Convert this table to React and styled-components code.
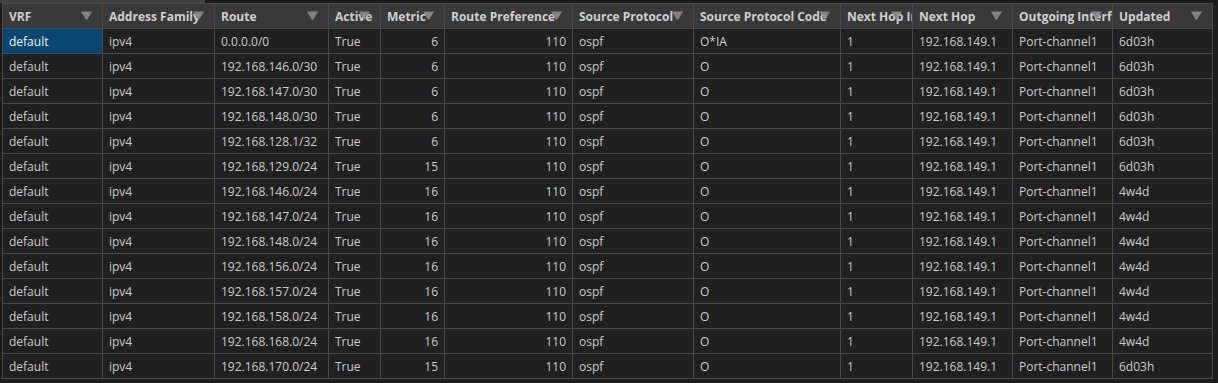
import styled, { createGlobalStyle } from "styled-components";

const GlobalStyle = createGlobalStyle`
	html, body {
		margin: 0;
		padding: 0;
		background: #1c1c1c;
	}
	body {
		font-family: "Open Sans", "Noto Sans", sans-serif;
		font-size: 12px;
		color: #cccccc;
	}
`;

const columns = [
	{ key: "vrf", label: "VRF", width: 100 },
	{ key: "af", label: "Address Family", width: 112 },
	{ key: "route", label: "Route", width: 114 },
	{ key: "active", label: "Active", width: 52 },
	{ key: "metric", label: "Metric", width: 64, right: true },
	{ key: "pref", label: "Route Preference", width: 128, right: true },
	{ key: "proto", label: "Source Protocol", width: 121 },
	{ key: "code", label: "Source Protocol Code", width: 147 },
	{ key: "nhi", label: "Next Hop Interface", width: 72 },
	{ key: "nh", label: "Next Hop", width: 100 },
	{ key: "oif", label: "Outgoing Interface", width: 100 },
	{ key: "updated", label: "Updated", width: 100 },
];

const routes = [
	["0.0.0.0/0", 6, "O*IA", "6d03h"],
	["192.168.146.0/30", 6, "O", "6d03h"],
	["192.168.147.0/30", 6, "O", "6d03h"],
	["192.168.148.0/30", 6, "O", "6d03h"],
	["192.168.128.1/32", 6, "O", "6d03h"],
	["192.168.129.0/24", 15, "O", "6d03h"],
	["192.168.146.0/24", 16, "O", "4w4d"],
	["192.168.147.0/24", 16, "O", "4w4d"],
	["192.168.148.0/24", 16, "O", "4w4d"],
	["192.168.156.0/24", 16, "O", "4w4d"],
	["192.168.157.0/24", 16, "O", "4w4d"],
	["192.168.158.0/24", 16, "O", "4w4d"],
	["192.168.168.0/24", 16, "O", "4w4d"],
	["192.168.170.0/24", 15, "O", "6d03h"],
].map(([route, metric, code, updated]) => ({
	vrf: "default",
	af: "ipv4",
	route,
	active: "True",
	metric,
	pref: 110,
	proto: "ospf",
	code,
	nhi: "1",
	nh: "192.168.149.1",
	oif: "Port-channel1",
	updated,
}));

const Page = styled.div`
	display: flex;
	flex-direction: column;
`;

const ScrollStrip = styled.div`
	height: 3px;
	background: #1a1a1a;
	display: flex;
`;

const ScrollThumb = styled.div`
	width: 205px;
	background: #424242;
`;

const Grid = styled.div`
	display: grid;
	grid-template-columns: ${({ widths }) => widths.map((w) => `${w}px`).join(" ")};
	grid-auto-rows: 25px;
	margin-left: 2px;
	width: max-content;
	border-left: 1px solid #4a4a4a;
	border-top: 1px solid #4a4a4a;
`;

const HeaderCell = styled.div`
	position: relative;
	box-sizing: border-box;
	background: #393939;
	border-right: 1px solid #4a4a4a;
	border-bottom: 1px solid #4a4a4a;
	padding: 0 6px;
	display: flex;
	align-items: center;
	font-weight: 700;
	color: #cfcfcf;
	white-space: nowrap;
	overflow: hidden;
`;

const FilterIcon = styled.svg`
	position: absolute;
	right: 10px;
	top: 7px;
	width: 11px;
	height: 9px;
	fill: #8c8c8c;
	opacity: 0.9;
`;

const Cell = styled.div`
	box-sizing: border-box;
	background: ${({ selected }) => (selected ? "#094771" : "#202020")};
	color: ${({ selected }) => (selected ? "#f0f0f0" : "#cccccc")};
	border-right: 1px solid #4a4a4a;
	border-bottom: 1px solid #4a4a4a;
	padding: 0 6px;
	display: flex;
	align-items: center;
	justify-content: ${({ right }) => (right ? "flex-end" : "flex-start")};
	white-space: nowrap;
	overflow: hidden;
`;

const Filter = () => (
	<FilterIcon viewBox="0 0 11 9">
		<path d="M0 0.5 H11 L6.2 8.5 H4.8 Z" />
	</FilterIcon>
);

export default function App() {
	return (
		<Page>
			<GlobalStyle />
			<ScrollStrip>
				<ScrollThumb />
			</ScrollStrip>
			<Grid widths={columns.map((c) => c.width)}>
				{columns.map((c) => (
					<HeaderCell key={c.key}>
						{c.label}
						<Filter />
					</HeaderCell>
				))}
				{routes.map((row, i) =>
					columns.map((c, j) => (
						<Cell
							key={`${i}-${c.key}`}
							right={c.right}
							selected={i === 0 && j === 0}
						>
							{row[c.key]}
						</Cell>
					))
				)}
			</Grid>
		</Page>
	);
}
